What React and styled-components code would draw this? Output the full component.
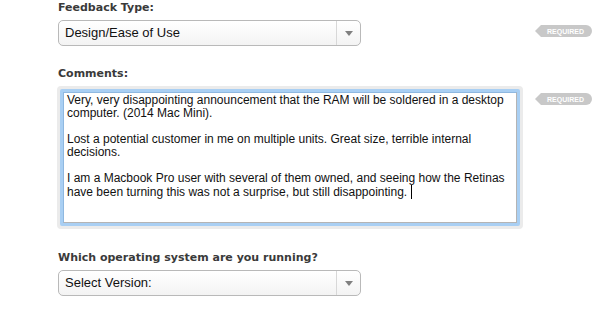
import React from 'react';
import styled, { createGlobalStyle } from 'styled-components';

const Global = createGlobalStyle`
  html, body { margin: 0; padding: 0; background: #fff; }
  body { width: 609px; height: 314px; overflow: hidden; }
`;

const Form = styled.form`
  display: flex;
  flex-direction: column;
  padding: 1px 0 0 57px;
`;

const Row = styled.div`
  display: grid;
  grid-template-columns: 466px auto;
  column-gap: 12px;
  margin-top: ${p => p.$gap || 0}px;
`;

const Label = styled.label`
  grid-column: 1;
  grid-row: 1;
  display: block;
  height: 14px;
  line-height: 14px;
  padding-left: 1px;
  margin-bottom: 5px;
  font: bold 11px "DejaVu Sans", sans-serif;
  color: #3a3a3a;
`;

const Select = styled.div`
  grid-column: 1;
  grid-row: 2;
  box-sizing: border-box;
  margin-left: 1px;
  width: 303px;
  height: 26px;
  display: flex;
  border: 1px solid #b9b9b9;
  border-radius: 5px;
  background: linear-gradient(#ffffff, #f3f3f3);
  font: 13px "Liberation Sans", Arial, sans-serif;
  color: #111;
`;

const SelectValue = styled.span`
  flex: 1;
  padding-left: 6px;
  line-height: 24px;
`;

const SelectArrow = styled.span`
  width: 23px;
  border-left: 1px solid #d8d8d8;
  display: flex;
  align-items: center;
  justify-content: center;
  &::after {
    content: '';
    border-left: 4px solid transparent;
    border-right: 4px solid transparent;
    border-top: 5px solid #808080;
  }
`;

const Badge = styled.span`
  grid-column: 2;
  grid-row: 2;
  align-self: start;
  justify-self: start;
  position: relative;
  display: inline-flex;
  align-items: center;
  height: 12px;
  margin-top: ${p => p.$offset || 0}px;
  margin-left: 6px;
  padding: 0 8px 0 6px;
  background: #c8c8c8;
  border-radius: 0 6px 6px 0;
  font: bold 7px "Liberation Sans", Arial, sans-serif;
  color: #fff;
  &::before {
    content: '';
    position: absolute;
    left: -6px;
    top: 0;
    border-style: solid;
    border-width: 6px 6px 6px 0;
    border-color: transparent #c8c8c8 transparent transparent;
  }
`;

const AreaGlow = styled.div`
  grid-column: 1;
  grid-row: 2;
  box-sizing: border-box;
  height: 143px;
  padding: 3px;
  background: #ebebeb;
  border-radius: 4px;
`;

const AreaRing = styled.div`
  box-sizing: border-box;
  height: 100%;
  border: 3px solid #a9cff3;
  border-radius: 2px;
`;

const AreaInner = styled.div`
  box-sizing: border-box;
  height: 100%;
  background: #fff;
  border: 1px solid #b4b4b4;
  border-top-color: #8fb8e0;
  border-left-color: #8fb8e0;
  padding: 1px 3px;
  font: 12px "Liberation Sans", Arial, sans-serif;
  line-height: 13px;
  color: #111;
`;

const Line = styled.div`
  height: 13px;
  white-space: nowrap;
`;

const Caret = styled.span`
  display: inline-block;
  width: 1px;
  height: 14px;
  background: #000;
  vertical-align: -3px;
`;

const lines = [
  'Very, very disappointing announcement that the RAM will be soldered in a desktop',
  'computer. (2014 Mac Mini).',
  '',
  'Lost a potential customer in me on multiple units. Great size, terrible internal',
  'decisions.',
  '',
  'I am a Macbook Pro user with several of them owned, and seeing how the Retinas',
];

export default function App() {
  return (
    <>
      <Global />
      <Form>
        <Row>
          <Label>Feedback Type:</Label>
          <Select>
            <SelectValue>Design/Ease of Use</SelectValue>
            <SelectArrow />
          </Select>
          <Badge $offset={5}>REQUIRED</Badge>
        </Row>
        <Row $gap={21}>
          <Label>Comments:</Label>
          <AreaGlow>
            <AreaRing>
              <AreaInner>
                {lines.map((l, i) => (
                  <Line key={i}>{l}</Line>
                ))}
                <Line>
                  have been turning this was not a surprise, but still disappointing.&nbsp;<Caret />
                </Line>
              </AreaInner>
            </AreaRing>
          </AreaGlow>
          <Badge $offset={7}>REQUIRED</Badge>
        </Row>
        <Row $gap={22}>
          <Label>Which operating system are you running?</Label>
          <Select>
            <SelectValue>Select Version:</SelectValue>
            <SelectArrow />
          </Select>
        </Row>
      </Form>
    </>
  );
}
